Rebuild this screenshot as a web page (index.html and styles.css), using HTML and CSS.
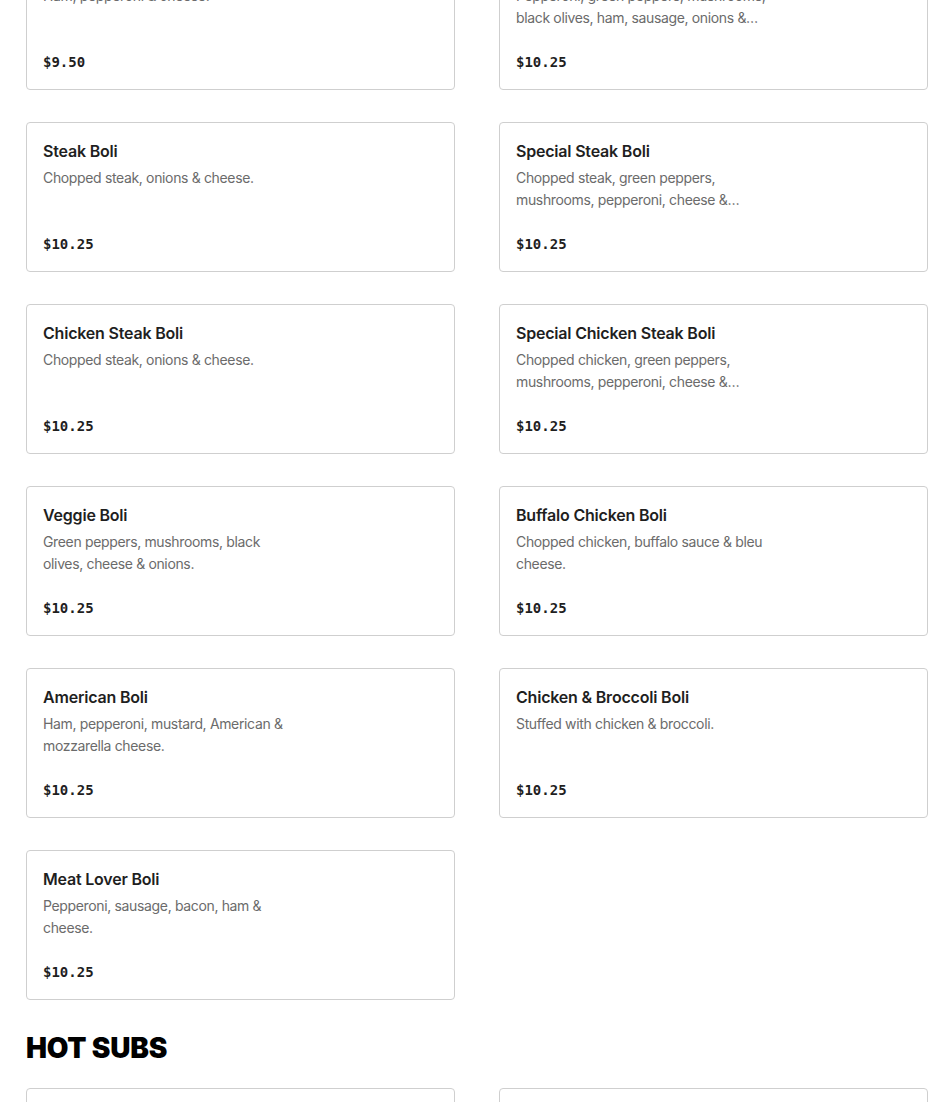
FILE: index.html
```html
<!DOCTYPE html>
<html lang="en">
<head>
<meta charset="utf-8">
<title>Menu</title>
<link rel="stylesheet" href="styles.css">
</head>
<body>
<main class="menu">
  <section class="category">
    <div class="grid">
      <article class="card">
        <h3 class="card-title">Ham Boli</h3>
        <p class="card-desc">Ham, pepperoni &amp; cheese.</p>
        <div class="card-price">$9.50</div>
      </article>
      <article class="card">
        <h3 class="card-title">Special Boli</h3>
        <p class="card-desc">Pepperoni, green peppers, mushrooms, black olives, ham, sausage, onions &amp; cheese.</p>
        <div class="card-price">$10.25</div>
      </article>
      <article class="card">
        <h3 class="card-title">Steak Boli</h3>
        <p class="card-desc">Chopped steak, onions &amp; cheese.</p>
        <div class="card-price">$10.25</div>
      </article>
      <article class="card">
        <h3 class="card-title">Special Steak Boli</h3>
        <p class="card-desc">Chopped steak, green peppers, mushrooms, pepperoni, cheese &amp; onions.</p>
        <div class="card-price">$10.25</div>
      </article>
      <article class="card">
        <h3 class="card-title">Chicken Steak Boli</h3>
        <p class="card-desc">Chopped steak, onions &amp; cheese.</p>
        <div class="card-price">$10.25</div>
      </article>
      <article class="card">
        <h3 class="card-title">Special Chicken Steak Boli</h3>
        <p class="card-desc">Chopped chicken, green peppers, mushrooms, pepperoni, cheese &amp; onions.</p>
        <div class="card-price">$10.25</div>
      </article>
      <article class="card">
        <h3 class="card-title">Veggie Boli</h3>
        <p class="card-desc">Green peppers, mushrooms, black olives, cheese &amp; onions.</p>
        <div class="card-price">$10.25</div>
      </article>
      <article class="card">
        <h3 class="card-title">Buffalo Chicken Boli</h3>
        <p class="card-desc">Chopped chicken, buffalo sauce &amp; bleu cheese.</p>
        <div class="card-price">$10.25</div>
      </article>
      <article class="card">
        <h3 class="card-title">American Boli</h3>
        <p class="card-desc">Ham, pepperoni, mustard, American &amp; mozzarella cheese.</p>
        <div class="card-price">$10.25</div>
      </article>
      <article class="card">
        <h3 class="card-title">Chicken &amp; Broccoli Boli</h3>
        <p class="card-desc">Stuffed with chicken &amp; broccoli.</p>
        <div class="card-price">$10.25</div>
      </article>
      <article class="card">
        <h3 class="card-title">Meat Lover Boli</h3>
        <p class="card-desc">Pepperoni, sausage, bacon, ham &amp; cheese.</p>
        <div class="card-price">$10.25</div>
      </article>
    </div>
  </section>
  <section class="category">
    <h2 class="category-title">HOT SUBS</h2>
    <div class="grid">
      <article class="card">
        <h3 class="card-title">Meatball Sub</h3>
        <p class="card-desc">Meatballs, sauce &amp; cheese.</p>
        <div class="card-price">$9.50</div>
      </article>
      <article class="card">
        <h3 class="card-title">Sausage Sub</h3>
        <p class="card-desc">Sausage, sauce &amp; cheese.</p>
        <div class="card-price">$9.50</div>
      </article>
    </div>
  </section>
</main>
</body>
</html>
```

FILE: styles.css
```css
* { box-sizing: border-box; }

html, body {
  margin: 0;
  padding: 0;
  background: #ffffff;
}

body {
  font-family: "Inter", "Liberation Sans", Arial, sans-serif;
  color: #1f1f1f;
}

.menu {
  width: 950px;
  padding: 0 22px 40px 26px;
  margin-top: -60px;
}

.grid {
  display: grid;
  grid-template-columns: 429px 429px;
  column-gap: 44px;
  row-gap: 32px;
}

.card {
  height: 150px;
  border: 1px solid #cfcfcf;
  border-radius: 4px;
  padding: 16px 16px 17px 16px;
  display: flex;
  flex-direction: column;
  background: #fff;
}

.card-title {
  margin: 0;
  font-size: 16px;
  line-height: 24px;
  font-weight: 600;
  letter-spacing: -0.2px;
  color: #1f1f1f;
}

.card-desc {
  margin: 4px 0 0 0;
  max-width: 255px;
  font-size: 14px;
  line-height: 22px;
  letter-spacing: -0.35px;
  color: #6b6b6b;
  display: -webkit-box;
  -webkit-line-clamp: 2;
  -webkit-box-orient: vertical;
  overflow: hidden;
}

.card-price {
  margin-top: auto;
  font-family: "DejaVu Sans Mono", "Liberation Mono", monospace;
  font-weight: 700;
  font-size: 14px;
  line-height: 20px;
  color: #1f1f1f;
}

.category-title {
  margin: 30px 0 22px 0;
  font-family: "Inter", "Liberation Sans", Arial, sans-serif;
  font-weight: 900;
  font-size: 28px;
  line-height: 36px;
  color: #000;
  letter-spacing: -0.2px;
}
```
